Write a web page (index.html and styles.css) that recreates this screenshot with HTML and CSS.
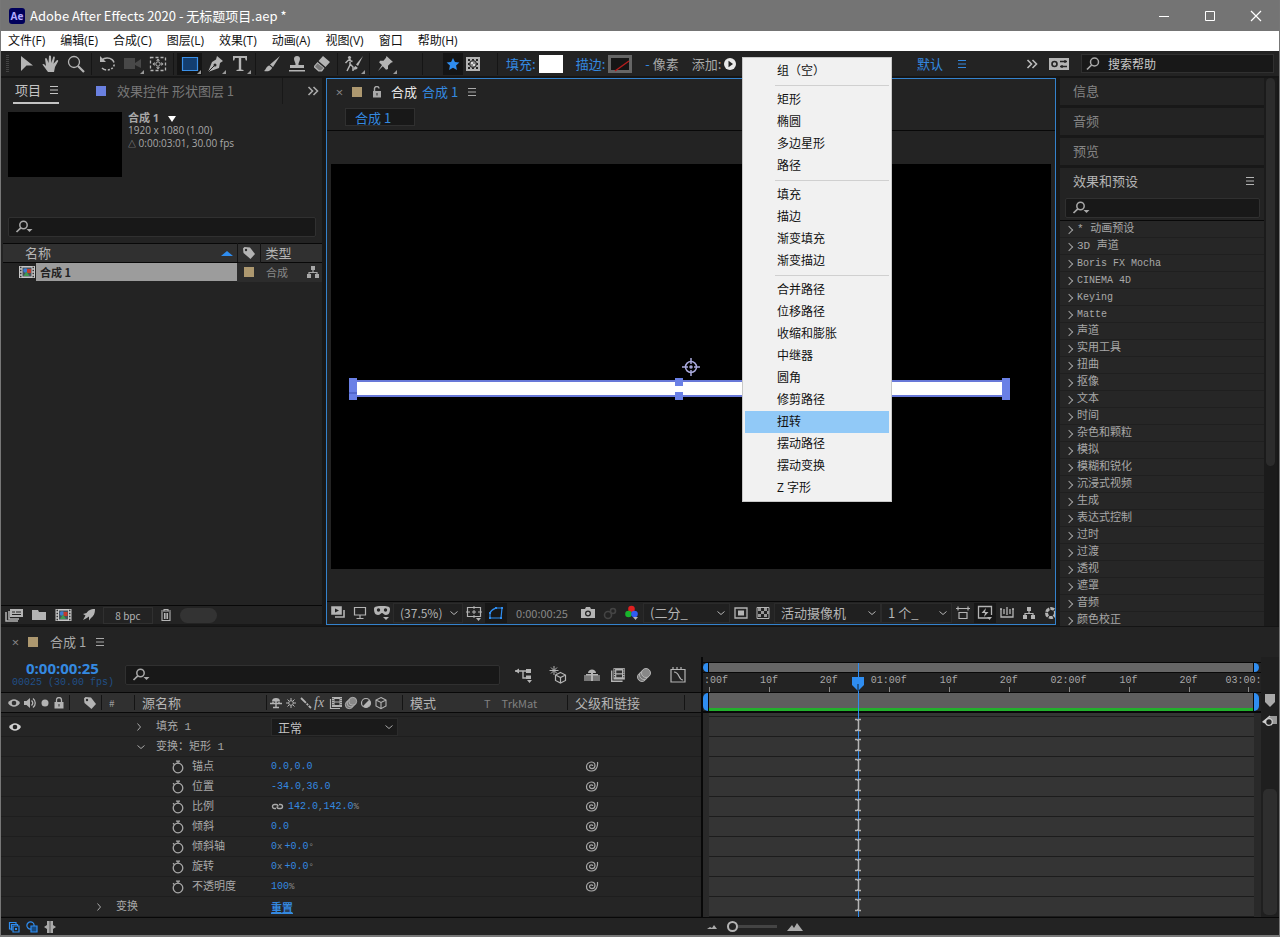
FILE: index.html
```html
<!DOCTYPE html>
<html lang="zh-CN">
<head>
<meta charset="utf-8">
<title>Adobe After Effects 2020 - 无标题项目.aep *</title>
<link rel="stylesheet" href="styles.css">
</head>
<body>
<svg class="defs" aria-hidden="true">
  <symbol id="search" viewBox="0 0 16 16"><circle cx="9.500" cy="6" r="4" fill="none" stroke="currentColor" stroke-width="1.500"/><path d="M6.600 9L2 13.500" stroke="currentColor" stroke-width="1.700"/></symbol>
  <symbol id="searchdrop" viewBox="0 0 18 16"><circle cx="8.500" cy="6" r="3.700" fill="none" stroke="currentColor" stroke-width="1.500"/><path d="M5.800 8.800L1.500 13" stroke="currentColor" stroke-width="1.700"/><path d="M11.500 10h6l-3 3z" fill="currentColor"/></symbol>
  <symbol id="lines" viewBox="0 0 10 10"><path d="M1 1.500h8M1 5h8M1 8.500h8" stroke="currentColor"/></symbol>
  <symbol id="more" viewBox="0 0 12 10"><path d="M1.500 1l4 4-4 4M6.500 1l4 4-4 4" fill="none" stroke="currentColor" stroke-width="1.600"/></symbol>
  <symbol id="chev" viewBox="0 0 10 10"><path d="M3.500 1.500L6.500 5 3.500 8.500" fill="none" stroke="currentColor"/></symbol>
  <symbol id="chevdown" viewBox="0 0 10 10"><path d="M1.500 3.500L5 6.500l3.500-3" fill="none" stroke="currentColor"/></symbol>
  <symbol id="watch" viewBox="0 0 14 14"><circle cx="7" cy="8" r="4.800" fill="none" stroke="currentColor" stroke-width="1.300"/><path d="M5 1.200h4M7 1v2.500M2 3.200l1.600 1.600" stroke="currentColor" stroke-width="1.300"/></symbol>
  <symbol id="whip" viewBox="0 0 14 12"><path d="M12.500 1c.5 4-1 9-6 9C3.500 10 1.500 8.500 1.500 5.800 1.500 3 3.800 1 6.300 1 8.800 1 10 2.500 10 4.600 10 6.500 8.700 7.600 7 7.600 5.500 7.600 4.500 6.800 4.500 5.600c0-1 .7-1.800 1.900-1.800.9 0 1.400.5 1.400 1.300" fill="none" stroke="currentColor" stroke-width="1.200"/></symbol>
  <symbol id="tag" viewBox="0 0 14 14"><path d="M1 2.500L2.500 1 8 1.500 13 8 8.500 13 1.500 7z" fill="currentColor"/><circle cx="4" cy="4" r="1.200" fill="#303030"/></symbol>
  <symbol id="tree" viewBox="0 0 14 14"><path d="M5 1h4v4H5zM1 9h4v4H1zM9 9h4v4H9z" fill="currentColor"/><path d="M7 4v3.500M3 9V7.500h8V9" fill="none" stroke="currentColor" stroke-width="1.200"/></symbol>
  <symbol id="comp" viewBox="0 0 16 14"><path d="M0 1h16v12H0z" fill="#c6c6c6"/><path d="M3.500 2.500h9v9h-9z" fill="#48505a"/><path d="M1 2.500h1.500m-1.500 3h1.500m-1.500 3h1.500m-1.500 3h1.500m11-9H15m-1.500 3H15m-1.500 3H15m-1.500 3H15" stroke="#333" stroke-width="1.300"/><circle cx="6.500" cy="5.500" r="2.200" fill="#3b7bd0"/><path d="M8 4h4v4H8z" fill="#c33b2c"/><path d="M4.500 11l3-4.500 3 4.500z" fill="#3f9b50"/></symbol>
  <symbol id="film" viewBox="0 0 14 14"><path d="M3 1h10v10H3z" fill="currentColor"/><path d="M5.500 3h5v2.500h-5zM5.500 6.500h5V9h-5z" fill="#303030"/><path d="M4 2v8M12 2v8" stroke="#303030" stroke-dasharray="1 1"/><path d="M1.500 3v9.500H11" fill="none" stroke="currentColor" stroke-width="1.200"/></symbol>
  <symbol id="blur" viewBox="0 0 16 16"><circle cx="6" cy="10" r="4.500" fill="#777" stroke="currentColor"/><circle cx="8" cy="8" r="4.500" fill="#777" stroke="currentColor"/><circle cx="10" cy="6" r="4.500" fill="#888" stroke="currentColor"/></symbol>
  <symbol id="cube" viewBox="0 0 14 14"><path d="M7 1.500l5 2.500v6l-5 2.700L2 10V4zM2 4l5 2.500L12 4M7 6.500v6" fill="none" stroke="currentColor" stroke-width="1.100"/></symbol>
  <symbol id="shy" viewBox="0 0 14 14"><path d="M3 5.500C3 3 4.500 2 7 2s4 1 4 3.500z" fill="currentColor"/><path d="M7 4v8M1 7.500h12M4 11.500h6M4 6v1m6-1v1" stroke="currentColor" stroke-width="1.400"/></symbol>
  <symbol id="checks" viewBox="0 0 14 14"><path d="M1 1.500h12v11H1z" fill="none" stroke="currentColor"/><path d="M2 2h3v3H2zm6 0h3v3H8zM5 5h3v3H5zm6 0h2v3h-2zM2 8h3v3H2zm6 0h3v3H8z" fill="#999"/></symbol>
  <symbol id="maskmaker" viewBox="0 0 16 16"><path d="M1 1h14v14H1z" fill="currentColor"/><path d="M3 3h2v2H3zm4 0h2v1H7zm4 0h2v2h-2zM3 7h1v2H3zm9 0h1v2h-1zM3 11h2v2H3zm4 1h2v1H7zm4-1h2v2h-2z" fill="#232323"/><circle cx="8" cy="8" r="3.500" fill="#888" stroke="#232323"/><path d="M6 6h2v2H6zM8 8h2v2H8z" fill="#ddd"/></symbol>
  <symbol id="ibeam" viewBox="0 0 8 14"><path d="M1 1.500h2L4 2.500 5 1.500h2M1 12.500h2l1-1 1 1h2M4.500 2v10" fill="none" stroke="currentColor" stroke-width="1.500"/></symbol>
</svg>

<div class="window">
  <header class="titlebar">
    <span class="logo">Ae</span>
    <h1 class="title">Adobe After Effects 2020 - 无标题项目.aep *</h1>
    <button class="wbtn" aria-label="最小化"><svg width="12" height="12"><path d="M1 6.500h10" stroke="#fff"/></svg></button>
    <button class="wbtn" aria-label="最大化"><svg width="12" height="12"><path d="M1.500 1.500h9v9h-9z" fill="none" stroke="#fff"/></svg></button>
    <button class="wbtn" aria-label="关闭"><svg width="12" height="12"><path d="M1 1l10 10M11 1L1 11" stroke="#fff" stroke-width="1.200"/></svg></button>
  </header>

  <nav class="menubar">
    <button>文件(F)</button><button>编辑(E)</button><button>合成(C)</button><button>图层(L)</button><button>效果(T)</button><button>动画(A)</button><button>视图(V)</button><button>窗口</button><button>帮助(H)</button>
  </nav>

  <div class="toolbar">
    <i class="grip"></i>
    <button class="tool" aria-label="选取"><svg width="20" height="20"><path d="M5 2l12 9.500H10.500L5 17z" fill="currentColor"/></svg></button>
    <button class="tool" aria-label="手形"><svg width="20" height="20"><path d="M7 18c-2-3-4-5-5.500-7.500 1-1 2 0 3.500 1.500L4 4.500c1.200-.6 2 0 2.200 1L7.500 9 8 2c.8-.8 1.800-.6 2 .3L10.300 9l2-6.300c1-.5 1.700.1 1.500 1.200L12.500 9.800 16 6c1.100-.2 1.500.6 1 1.600L14 13l-1 5z" fill="currentColor"/></svg></button>
    <button class="tool" aria-label="缩放"><svg width="20" height="20"><circle cx="8" cy="8" r="5.500" fill="none" stroke="currentColor" stroke-width="1.300"/><path d="M12 12l6 6" stroke="currentColor" stroke-width="2.200"/></svg></button>
    <i class="sep"></i>
    <button class="tool" aria-label="旋转"><svg width="20" height="20"><path d="M4 6a7 6 0 1 1 0 8" fill="none" stroke="currentColor" stroke-width="1.600" stroke-dasharray="14 2 2 1.500 2 1.500 2 1.500"/><path d="M2 2v6h6z" fill="currentColor"/></svg></button>
    <button class="tool dim more" aria-label="摄像机"><svg width="20" height="20"><path d="M1 4h11v11H1zM12 9l6-4v9l-6-3z" fill="currentColor"/></svg></button>
    <button class="tool" aria-label="锚点"><svg width="20" height="20"><path d="M2.500 3.500h15v13h-15z" fill="none" stroke="currentColor" stroke-width="1.300" stroke-dasharray="3 2"/><circle cx="10" cy="10" r="2.200" fill="none" stroke="currentColor"/><path d="M10 4.500l2 2.200H8zM10 15.500l2-2.200H8zM4.500 10l2.200-2v4zM15.500 10l-2.200-2v4z" fill="currentColor"/></svg></button>
    <i class="sep"></i>
    <button class="tool active more" aria-label="矩形"><svg width="20" height="20"><path d="M2.500 3.500h15v13h-15z" fill="#133e70" stroke="#3b90e8" stroke-width="1.200"/></svg></button>
    <button class="tool more" aria-label="钢笔"><svg width="20" height="20"><path d="M12 2l6 5-3 2-1 5-11 4 4-10 4-2.500zM3 18l6-6" fill="currentColor"/><path d="M3 18l6-6" stroke="#232323"/><circle cx="10" cy="11" r="1.500" fill="#232323"/></svg></button>
    <button class="tool more" aria-label="文字"><svg width="20" height="20"><path d="M3 2h14v4.500h-1.200L15 4H11.200v11.500l2.300.5v1h-7v-1l2.300-.5V4H5l-.8 2.500H3z" fill="currentColor"/></svg></button>
    <i class="sep"></i>
    <button class="tool" aria-label="画笔"><svg width="20" height="20"><path d="M18 2L11 13 8 10.500zM7.500 11.500l2.700 2.200C9 17 5 18 2 17c2-1 2-5 5.500-5.500z" fill="currentColor"/></svg></button>
    <button class="tool" aria-label="仿制图章"><svg width="20" height="20"><path d="M8.500 11c.4-2-1.500-4-1.500-6a3 3 0 0 1 6 0c0 2-1.900 4-1.500 6H17v3H3v-3zM2 16h16v1.500H2z" fill="currentColor"/></svg></button>
    <button class="tool" aria-label="橡皮擦"><svg width="20" height="20"><path d="M11 2l7 6-4.500 5-7-6zM5.500 8l7 6-2.500 3.500H6.500L2 13.500V12z" fill="currentColor"/><path d="M5.500 9.500L3 12.500 7 16.200h2L11.500 14z" fill="#777"/></svg></button>
    <i class="sep"></i>
    <button class="tool more" aria-label="Roto 笔刷"><svg width="20" height="20"><circle cx="5.500" cy="3.500" r="1.600" fill="currentColor"/><path d="M6 5v6l-3 6M6 10l3 3v4M1.500 9l3-3 4 1.500" fill="none" stroke="currentColor" stroke-width="1.500"/><path d="M19 2l-5 10-2-1.500zM11.500 12l2.200 1.800c-.8 2-3 2.200-5 1.700 1.500-.5 1-3 2.800-3.500z" fill="currentColor"/></svg></button>
    <i class="sep"></i>
    <button class="tool more" aria-label="人偶位置控点"><svg width="20" height="20"><path d="M10.500 2l6.500 6-2 .8-3 3 0 3.200-2 .8-3.200-3.500L2 17l4-6-2.800-2.500.8-1.700h3.500l2.500-3z" fill="currentColor"/></svg></button>
    <i class="sep wide"></i>
    <button class="tool small active" aria-label="创建形状"><svg width="14" height="14" viewBox="0 0 16 16"><path d="M8 1l2.200 4.700 5.100.6-3.800 3.500 1 5.100L8 12.400l-4.500 2.500 1-5.100L.7 6.300l5.100-.6z" fill="#2f8df0"/></svg></button>
    <button class="tool small" aria-label="创建蒙版"><svg width="16" height="16"><use href="#maskmaker"/></svg></button>
    <i class="sep mid"></i>
    <div class="opt blue">填充:<button class="swatch fill" aria-label="填充颜色"></button></div>
    <div class="opt blue">描边:<button class="swatch stroke" aria-label="描边颜色"><svg width="22" height="16"><path d="M4 13L18 3" stroke="#b51d1d" stroke-width="1.500"/></svg></button></div>
    <div class="opt"><span class="blue">-</span> 像素</div>
    <div class="opt">添加:<button class="add" aria-label="添加"><svg width="12" height="12"><circle cx="6" cy="6" r="6" fill="#e8e8e8"/><path d="M4.500 2.800L9 6 4.500 9.200z" fill="#222"/></svg></button></div>
    <div class="workspace blue">默认<svg width="10" height="10"><use href="#lines"/></svg></div>
    <button class="chevmore" aria-label="更多工作区"><svg width="12" height="10"><use href="#more"/></svg></button>
    <button class="tool" aria-label="同步设置"><svg width="20" height="14"><path d="M0 1h20v12H0z" fill="currentColor"/><circle cx="5.500" cy="7" r="2.500" fill="none" stroke="#232323" stroke-width="1.600"/><path d="M11 4.500h7M11 9.500h7M16 3v3M13 8v3" stroke="#232323" stroke-width="1.300"/></svg></button>
    <label class="help"><svg width="16" height="16"><use href="#search"/></svg><input type="text" placeholder="搜索帮助" aria-label="搜索帮助"></label>
  </div>

  <main class="panels">
    <section class="project panel">
      <div class="tabs">
        <button class="tab on">项目<svg width="10" height="10"><use href="#lines"/></svg></button>
        <button class="tab second"><i class="sq violet"></i>效果控件 形状图层 1</button>
        <button class="tabmore" aria-label="更多面板"><svg width="12" height="10"><use href="#more"/></svg></button>
      </div>
      <div class="info">
        <div class="thumb"></div>
        <div class="meta"><b>合成 1 <svg width="8" height="6"><path d="M0 0h8L4 6z" fill="#fff"/></svg></b><span>1920 x 1080 (1.00)</span><span><small>△</small> 0:00:03:01, 30.00 fps</span></div>
      </div>
      <label class="field"><svg width="18" height="16"><use href="#searchdrop"/></svg><input type="text" aria-label="搜索项目"></label>
      <table class="files">
        <colgroup><col class="c1"><col class="c2"><col class="c3"><col class="c4"></colgroup>
        <thead><tr><th><div class="namehead"><span>名称</span><svg width="12" height="5"><path d="M0 5L6 0l6 5z" fill="#2f8df0"/></svg></div></th><th class="cen"><svg width="14" height="14"><use href="#tag"/></svg></th><th>类型</th><th></th></tr></thead>
        <tbody><tr><td class="nm"><div class="namecell"><svg width="16" height="14"><use href="#comp"/></svg><b>合成 1</b></div></td><td class="cen"><i class="sq tan"></i></td><td class="kind">合成</td><td class="cen"><svg width="14" height="14"><use href="#tree"/></svg></td></tr></tbody>
      </table>
      <div class="projbar">
        <button aria-label="解释素材"><svg width="18" height="14"><path d="M5 1h13v8H5z" fill="currentColor"/><path d="M7 4h3m1 0h5M7 6.500h9" stroke="#232323"/><path d="M1 4v9h12M4 3v8h10" fill="none" stroke="currentColor" stroke-width="1.500"/></svg></button>
        <button aria-label="新建文件夹"><svg width="14" height="14"><path d="M0 2h6l1 2h7v8H0z" fill="currentColor"/></svg></button>
        <button aria-label="新建合成"><svg width="17" height="14"><use href="#comp"/></svg></button>
        <button aria-label="加速"><svg width="14" height="14"><path d="M13 1C8 1 6 3 4.500 5L1 6l2.500 1.500L1 12l3-1.500L7 8.500v4L9 10c2.500-2 4-4 4-9z" fill="currentColor"/></svg></button>
        <button class="bpc">8 bpc</button>
        <button aria-label="删除"><svg width="12" height="14"><path d="M1 3h10M4 3V1.500h4V3M2 4v8.500h8V4M4.500 5v6M7.500 5v6M6 5v6" fill="none" stroke="currentColor" stroke-width="1.100"/></svg></button>
        <i class="pill"></i>
      </div>
    </section>

    <section class="viewer">
      <div class="vtabs">
        <button class="x" aria-label="关闭面板">×</button><i class="sq tan"></i>
        <svg class="lock" width="10" height="12"><path d="M1 5h8v6.500H1z" fill="currentColor"/><path d="M2.500 6V3a2 2 0 0 1 4.500-.5" fill="none" stroke="currentColor" stroke-width="1.400"/><path d="M5 7v2.500" stroke="#232323"/></svg>
        <span class="white">合成</span><span class="blue">合成 1</span><svg class="mn" width="10" height="10"><use href="#lines"/></svg>
      </div>
      <div class="crumbs"><button>合成 1</button></div>
      <div class="stage">
        <svg class="canvas" viewBox="0 0 720 405">
          <path d="M0 0h720v405H0z" fill="#000"/>
          <path d="M22 217h656v15H22z" fill="#fff" stroke="#6878d8" stroke-width="2"/>
          <path d="M18 214h8v22h-8zM671 214h8v22h-8zM344 214h8v8h-8zM344 228h8v8h-8z" fill="#6a80e6"/>
          <path d="M18 229h8" stroke="#3c4fae"/>
          <g fill="none" stroke="#a9a9dc" stroke-width="1.500"><circle cx="360" cy="203" r="5.500"/><circle cx="360" cy="203" r="1"/><path d="M360 194v6M360 206v6M351 203h6M363 203h6"/></g>
        </svg>
      </div>
      <div class="vbar">
        <button aria-label="始终预览"><svg width="14" height="14"><path d="M1 1h9v7H1zM4 11h9V4" fill="none" stroke="currentColor" stroke-width="1.600"/><path d="M1 1h9v7H1z" fill="currentColor"/><path d="M4 2.500L8 4.500 4 6.500z" fill="#232323"/></svg></button>
        <button aria-label="主查看器"><svg width="14" height="14"><path d="M1.500 1.500h11v7.500h-11zM7 9v3M3.500 12.500h7" fill="none" stroke="currentColor" stroke-width="1.200"/></svg></button>
        <button aria-label="VR"><svg width="16" height="16"><path d="M0 4C0 1 4 1 8 1s8 0 8 3-1 6-4 6c-2 0-3-2-4-2s-2 2-4 2C1 10 0 7 0 4z" fill="currentColor"/><circle cx="4.500" cy="5" r="1.700" fill="#232323"/><circle cx="11.500" cy="5" r="1.700" fill="#232323"/><path d="M9 12h6l-3 3z" fill="currentColor"/></svg></button>
        <span class="sel w1"><select aria-label="放大率"><option>(37.5%)</option></select><svg width="10" height="10"><use href="#chevdown"/></svg></span>
        <button aria-label="网格"><svg width="16" height="16"><path d="M1.500 2.500h13v9h-13z" fill="none" stroke="currentColor" stroke-width="1.200"/><path d="M8 1v3M8 10v3M0 7h4M12 7h4M6 7h4M8 5v4" stroke="currentColor"/><path d="M10 13h5l-2.500 3z" fill="currentColor"/></svg></button>
        <button class="on" aria-label="蒙版可见"><svg width="16" height="14"><path d="M2 12V7C3 4 6 3 8 2h6l-1 10z" fill="none" stroke="#2f8df0" stroke-width="1.200"/><path d="M1 11h2v2H1zM12 11h2v2h-2zM13 1h2v2h-2zM1 6h2v2H1zM7 1h2v2H7z" fill="#2f8df0"/></svg></button>
        <span class="time">0:00:00:25</span>
        <button aria-label="快照"><svg width="14" height="14"><path d="M0 3h4l1-2h4l1 2h4v9H0z" fill="currentColor"/><circle cx="7" cy="7.500" r="3" fill="#232323"/><circle cx="7" cy="7.500" r="1.700" fill="currentColor"/></svg></button>
        <button class="dim" aria-label="显示快照"><svg width="14" height="14"><circle cx="5" cy="9" r="3.500" fill="none" stroke="#444" stroke-width="1.600"/><circle cx="10" cy="5" r="2.500" fill="none" stroke="#444" stroke-width="1.600"/></svg></button>
        <button aria-label="通道"><svg width="14" height="16"><circle cx="6.500" cy="4" r="3.300" fill="#e02020"/><circle cx="3.500" cy="9" r="3.300" fill="#19b42c"/><circle cx="9.500" cy="9" r="3.300" fill="#315cf0"/><path d="M8 12h5l-2.500 3z" fill="currentColor"/></svg></button>
        <span class="sel w2"><select aria-label="分辨率"><option>(二分_</option></select><svg width="10" height="10"><use href="#chevdown"/></svg></span>
        <button aria-label="目标区域"><svg width="14" height="14"><path d="M1 2h12v10H1z" fill="none" stroke="currentColor" stroke-width="1.300"/><path d="M4 4.500h6v5H4z" fill="currentColor"/></svg></button>
        <button aria-label="透明网格"><svg width="14" height="14"><use href="#checks"/></svg></button>
        <span class="sel w3"><select aria-label="3D 视图"><option>活动摄像机</option></select><svg width="10" height="10"><use href="#chevdown"/></svg></span>
        <span class="sel w4"><select aria-label="视图布局"><option>1 个_</option></select><svg width="10" height="10"><use href="#chevdown"/></svg></span>
        <button aria-label="像素长宽比"><svg width="14" height="14"><path d="M3 6.500h8v6H3zM0 2.500h14M2 .5v4M12 .5v4" fill="none" stroke="currentColor" stroke-width="1.200"/></svg></button>
        <button class="on" aria-label="快速预览"><svg width="16" height="16"><path d="M13 13H1.500V1.500h13V10" fill="none" stroke="currentColor" stroke-width="1.300"/><path d="M9 3L4.500 8H8l-1 4 4.500-5H8z" fill="currentColor"/><path d="M10 12h5l-2.500 3z" fill="currentColor"/></svg></button>
        <button aria-label="时间轴"><svg width="14" height="14"><path d="M1 3v8h12V3M4 3v5M7 1v8M10 3v5M0 3h2M12 3h2" fill="none" stroke="currentColor" stroke-width="1.300"/></svg></button>
        <button aria-label="流程图"><svg width="14" height="14"><use href="#tree"/></svg></button>
        <button aria-label="重置曝光度"><svg width="14" height="14"><circle cx="7" cy="7" r="4.500" fill="none" stroke="currentColor" stroke-width="3" stroke-dasharray="4 1"/></svg></button>
      </div>
    </section>

    <aside class="side">
      <div class="sidebody">
        <h2>信息</h2><h2>音频</h2><h2>预览</h2>
        <h2 class="open">效果和预设<svg width="10" height="10"><use href="#lines"/></svg></h2>
        <label class="field"><svg width="18" height="16"><use href="#searchdrop"/></svg><input type="text" aria-label="搜索效果"></label>
        <ul class="effects">
          <li>* 动画预设</li><li>3D 声道</li><li class="latin">Boris FX Mocha</li><li class="latin">CINEMA 4D</li><li class="latin">Keying</li><li class="latin">Matte</li><li>声道</li><li>实用工具</li><li>扭曲</li><li>抠像</li><li>文本</li><li>时间</li><li>杂色和颗粒</li><li>模拟</li><li>模糊和锐化</li><li>沉浸式视频</li><li>生成</li><li>表达式控制</li><li>过时</li><li>过渡</li><li>透视</li><li>遮罩</li><li>音频</li><li>颜色校正</li>
        </ul>
      </div>
      <div class="scroll"><i></i></div>
    </aside>
  </main>

  <section class="timeline">
    <div class="vtabs">
      <button class="x" aria-label="关闭时间轴">×</button><i class="sq tan"></i><span class="name">合成 1</span><svg class="mn" width="10" height="10"><use href="#lines"/></svg>
    </div>
    <div class="tgrid">
      <div class="layers">
        <div class="controls">
          <div class="clock"><b>0:00:00:25</b><span>00025 (30.00 fps)</span></div>
          <label class="field"><svg width="18" height="16"><use href="#searchdrop"/></svg><input type="text" aria-label="搜索图层"></label>
          <div class="icons">
            <button aria-label="合成微型流程图"><svg width="18" height="16"><path d="M0 4h12M8 4v7h4" fill="none" stroke="currentColor" stroke-width="1.400"/><path d="M0 4l4-2.500v5zM11 2h5v4h-5zM11 8.500h5V12h-5zM12 13h5l-2.500 3z" fill="currentColor"/></svg></button>
            <button aria-label="草图 3D"><svg width="18" height="18"><path d="M5 0v9M.5 4.500h9M2 1.500l6 6M8 1.500l-6 6" stroke="currentColor"/><path d="M11.500 6.500l5 2.500v5.500l-5 2.500-5-2.500V9zM6.500 9l5 2.500 5-2.500M11.500 11.500V17" fill="#232323" stroke="currentColor" stroke-width="1.200"/></svg></button>
            <button aria-label="隐藏躲避图层"><svg width="16" height="14"><path d="M0 7h16v6H0z" fill="#777"/><path d="M4 5c0-2 2-3.500 4-3.500S12 3 12 5zM2 6h12v1.500H2zM7 3h2v10H7z" fill="currentColor"/></svg></button>
            <button aria-label="帧混合"><svg width="16" height="16"><use href="#film"/></svg></button>
            <button aria-label="运动模糊"><svg width="16" height="16"><use href="#blur"/></svg></button>
            <button class="graph" aria-label="图表编辑器"><svg width="16" height="16"><path d="M1 2.500h14V15H1zM3 0v2M7 0v2M11 0v2M4 5c6 0 4 8 9 8" fill="none" stroke="currentColor" stroke-width="1.200"/></svg></button>
          </div>
        </div>
        <div class="colhead">
          <div class="av"><svg width="12" height="12"><path d="M0 6c3-5 9-5 12 0-3 5-9 5-12 0z" fill="currentColor"/><circle cx="6" cy="6" r="2.300" fill="#303030"/></svg><svg width="14" height="12"><path d="M1 4h2.500L7 1v10L3.500 8H1z" fill="currentColor"/><path d="M8.500 3.500c1.500 1.500 1.500 3.500 0 5M10 1.500c3 2.500 3 6.500 0 9" fill="none" stroke="currentColor" stroke-width="1.300"/></svg><svg width="10" height="12"><circle cx="5" cy="6" r="3.500" fill="currentColor"/></svg><svg width="12" height="12"><path d="M1.500 5h9v6.500h-9z" fill="currentColor"/><path d="M3.500 6V3a2.500 2.500 0 0 1 5 0v3" fill="none" stroke="currentColor" stroke-width="1.300"/><path d="M6 7v2.500" stroke="#303030"/></svg></div>
          <div class="tagcol"><svg width="14" height="14"><use href="#tag"/></svg></div>
          <div class="num">#</div>
          <div>源名称</div>
          <div class="switches"><svg width="14" height="14"><use href="#shy"/></svg><svg width="14" height="14"><circle cx="7" cy="7" r="2.300" fill="none" stroke="currentColor"/><path d="M7 2v2.500M7 9.500V12M2 7h2.500M9.500 7H12M3.500 3.500l1.500 1.500M9 9l1.500 1.500M10.500 3.500L9 5M5 9l-1.500 1.500" stroke="currentColor"/></svg><svg width="14" height="14"><path d="M2 2l10 10" stroke="currentColor" stroke-width="1.800" stroke-dasharray="7 1 2 1"/></svg><em>fx</em><svg width="14" height="14"><use href="#film"/></svg><svg width="14" height="14"><use href="#blur"/></svg><svg width="14" height="14"><circle cx="7" cy="7" r="4.500" fill="none" stroke="currentColor" stroke-width="1.200"/><path d="M3.800 10.200a4.500 4.500 0 0 0 6.400-6.400z" fill="currentColor"/></svg><svg width="14" height="14"><use href="#cube"/></svg></div>
          <div class="mode"><span>模式</span><span class="trk">T</span><span class="trk">TrkMat</span></div>
          <div>父级和链接</div>
          <div></div>
        </div>
        <div class="rows">
          <div class="row cut"></div>
          <div class="row"><div class="cell n1"><svg class="eye" width="12" height="12"><path d="M0 6c3-5 9-5 12 0-3 5-9 5-12 0z" fill="currentColor"/><circle cx="6" cy="6" r="2.300" fill="#232323"/></svg><svg width="10" height="10"><use href="#chev"/></svg><span>填充 1</span></div><div><span class="sel blend"><select aria-label="混合模式"><option>正常</option></select><svg width="10" height="10"><use href="#chevdown"/></svg></span></div></div>
          <div class="row"><div class="cell n2"><svg width="10" height="10"><use href="#chevdown"/></svg><span>变换：矩形 1</span></div></div>
          <div class="row"><div class="cell prop"><svg width="14" height="14"><use href="#watch"/></svg><span>锚点</span></div><div class="val">0.0<small>,</small>0.0</div><svg class="whip" width="14" height="12"><use href="#whip"/></svg></div>
          <div class="row"><div class="cell prop"><svg width="14" height="14"><use href="#watch"/></svg><span>位置</span></div><div class="val">-34.0<small>,</small>36.0</div><svg class="whip" width="14" height="12"><use href="#whip"/></svg></div>
          <div class="row"><div class="cell prop"><svg width="14" height="14"><use href="#watch"/></svg><span>比例</span></div><div class="val"><svg class="link" width="13" height="8"><path d="M5 5.500H3.500a2 2 0 0 1 0-4H5a2 2 0 0 1 2 2M8 1.500h1.500a2 2 0 0 1 0 4H8a2 2 0 0 1-2-2" fill="none" stroke="#aaa" stroke-width="1.400"/></svg>142.0<small>,</small>142.0<small>%</small></div><svg class="whip" width="14" height="12"><use href="#whip"/></svg></div>
          <div class="row"><div class="cell prop"><svg width="14" height="14"><use href="#watch"/></svg><span>倾斜</span></div><div class="val">0.0</div><svg class="whip" width="14" height="12"><use href="#whip"/></svg></div>
          <div class="row"><div class="cell prop"><svg width="14" height="14"><use href="#watch"/></svg><span>倾斜轴</span></div><div class="val">0<small class="turn">x</small>+0.0<small>°</small></div><svg class="whip" width="14" height="12"><use href="#whip"/></svg></div>
          <div class="row"><div class="cell prop"><svg width="14" height="14"><use href="#watch"/></svg><span>旋转</span></div><div class="val">0<small class="turn">x</small>+0.0<small>°</small></div><svg class="whip" width="14" height="12"><use href="#whip"/></svg></div>
          <div class="row"><div class="cell prop"><svg width="14" height="14"><use href="#watch"/></svg><span>不透明度</span></div><div class="val">100<small>%</small></div><svg class="whip" width="14" height="12"><use href="#whip"/></svg></div>
          <div class="row"><div class="cell n0"><svg width="10" height="10"><use href="#chev"/></svg><span>变换</span></div><div><a class="reset" href="#">重置</a></div></div>
        </div>
      </div>

      <div class="tracks">
        <div class="navbar"><i class="cap l"></i><i class="bar"></i><i class="cap r"></i></div>
        <div class="ruler"><span>:00f</span><span>10f</span><span>20f</span><span>01:00f</span><span>10f</span><span>20f</span><span>02:00f</span><span>10f</span><span>20f</span><span>03:00:</span></div>
        <div class="work"><i class="cap l"></i><i class="bar"></i><i class="cap r"></i></div>
        <div class="lanes"><i class="cut"></i><i></i><i></i><i></i><i></i><i></i><i></i><i></i><i></i><i></i><i></i></div>
        <div class="overlay"><div class="playhead"><svg class="head" width="12" height="14"><path d="M0 0h12v8l-6 6-6-6z" fill="#2f8df0"/><path d="M6 7v7" stroke="#123"/></svg><div class="beams"><svg width="8" height="14"><use href="#ibeam"/></svg><svg width="8" height="14"><use href="#ibeam"/></svg><svg width="8" height="14"><use href="#ibeam"/></svg><svg width="8" height="14"><use href="#ibeam"/></svg><svg width="8" height="14"><use href="#ibeam"/></svg><svg width="8" height="14"><use href="#ibeam"/></svg><svg width="8" height="14"><use href="#ibeam"/></svg><svg width="8" height="14"><use href="#ibeam"/></svg><svg width="8" height="14"><use href="#ibeam"/></svg><svg width="8" height="14"><use href="#ibeam"/></svg></div></div></div>
      </div>

      <div class="tside">
        <svg width="12" height="16"><path d="M1 1h10v8l-5 5-5-5z" fill="#aaa"/></svg>
        <svg width="16" height="16"><path d="M7 3h8v8H7z" fill="#999"/><path d="M1 9l7-6" stroke="#ccc" stroke-width="1.300"/><circle cx="7" cy="9" r="3.300" fill="#232323" stroke="#ccc" stroke-width="1.200"/><path d="M0 9l4-3v5z" fill="#ccc"/></svg>
        <i class="thumbbar"></i>
      </div>
    </div>
    <footer class="tfoot">
      <button aria-label="图层开关"><svg width="12" height="12"><path d="M5 5h6v6H5zM3 8H1.500V1.500H8V3M3.500 9.500v-6h6V5" fill="none" stroke="#2f8df0" stroke-width="1.200"/><path d="M7 7h2v2H7z" fill="#2f8df0"/></svg></button>
      <button aria-label="转换控制"><svg width="12" height="12"><circle cx="4.500" cy="4.500" r="3.600" fill="none" stroke="#2f8df0" stroke-width="1.200"/><path d="M5 5h6v6H5z" fill="#174a80" stroke="#2f8df0" stroke-width="1.200"/></svg></button>
      <button aria-label="入点出点"><svg width="12" height="12"><path d="M3 0h6v4l3 2-3 2v4H3V8L0 6l3-2z" fill="#aaa"/><path d="M6 0v12" stroke="#555"/></svg></button>
      <div class="zoom"><svg width="12" height="8"><path d="M1 6l3-2 2 1 2-3 3 4z" fill="#aaa"/></svg><input type="range" min="0" max="100" value="0" aria-label="时间缩放"><svg width="18" height="8"><path d="M1 8l5-6 2 3 3-5 6 8z" fill="#aaa"/></svg></div>
    </footer>
  </section>

  <div class="popup" role="menu">
    <button>组（空）</button><hr>
    <button>矩形</button><button>椭圆</button><button>多边星形</button><button>路径</button><hr>
    <button>填充</button><button>描边</button><button>渐变填充</button><button>渐变描边</button><hr>
    <button>合并路径</button><button>位移路径</button><button>收缩和膨胀</button><button>中继器</button><button>圆角</button><button>修剪路径</button><button class="hover">扭转</button><button>摆动路径</button><button>摆动变换</button><button>Z 字形</button>
  </div>
</div>
</body>
</html>
```

FILE: styles.css
```css
* { box-sizing: border-box; }
body {
  margin: 0;
  background: #141414;
  color: #a8a8a8;
  font: 13px/18px "Noto Sans CJK SC", sans-serif;
}
button, input, select { font: inherit; color: inherit; background: none; border: 0; padding: 0; margin: 0; }
button { white-space: nowrap; }
input, select { min-width: 0; outline: 0; }
h1, h2 { margin: 0; font-weight: 400; }
svg { flex: none; display: block; }
.defs { display: none; }
.blue { color: #3489e0; }
.white { color: #e8e8e8; }
.sq { display: block; width: 10px; height: 10px; flex: none; }
.tan { background: #ad986f; }
.violet { background: #6a80e0; }

.window {
  position: relative;
  display: flex;
  flex-direction: column;
  height: 100vh;
  border: solid #777;
  border-width: 0 1px 2px;
  overflow: hidden;
}

/* title and menus */
.titlebar { display: flex; align-items: center; flex: none; height: 31px; padding-left: 8px; background: #747474; color: #fff; }
.logo { width: 16px; height: 16px; border-radius: 3px; background: #00005b; color: #b0a8ff; font: bold 10px/16px "Open Sans", sans-serif; text-align: center; }
.title { flex: 1; margin-left: 5px; font-size: 13px; }
.wbtn { display: grid; place-items: center; width: 46px; height: 31px; }
.menubar { display: flex; flex: none; gap: 15px; height: 20px; padding-left: 7px; background: #fff; color: #111; font-size: 12px; font-family: "Open Sans", "Noto Sans CJK SC", sans-serif; }

/* tools */
.toolbar { display: flex; align-items: center; flex: none; height: 27px; padding-right: 5px; background: #232323; border-bottom: 2px solid #161616; }
.grip { width: 3px; height: 18px; margin: 0 4px 0 5px; background: repeating-linear-gradient(#444 0 1px, #222 1px 2px); }
.tool { position: relative; display: grid; place-items: center; width: 25px; height: 22px; flex: none; color: #b4b4b4; }
.tool.small { width: 20px; }
.tool.active { background: #141414; }
.tool.dim { color: #484848; }
.tool.more::after { content: ""; position: absolute; right: 1px; bottom: 1px; border: solid transparent; border-width: 0 0 4px 4px; border-bottom-color: #999; }
.sep { width: 1px; height: 22px; margin: 0 3px; background: #151515; flex: none; }
.sep.wide { margin: 0 20px 0 24px; }
.sep.mid { margin: 0 8px 0 14px; }
.opt { display: flex; align-items: center; gap: 3px; margin-right: 13px; white-space: nowrap; }
.swatch { width: 24px; height: 18px; }
.swatch.fill { background: #fff; }
.swatch.stroke { background: #151515; border: 3px solid #666; display: grid; place-items: center; }
.workspace { display: flex; align-items: center; gap: 14px; margin-left: auto; }
.chevmore { margin: 0 8px 0 59px; color: #bbb; }
.help { display: flex; align-items: center; width: 193px; height: 19px; margin-left: 10px; padding-left: 3px; gap: 7px; background: #181818; border: 1px solid #303030; font-size: 12px; }
.help input { flex: 1; }
.help input::placeholder { color: #c8c8c8; opacity: 1; }

/* panels */
.panels { display: flex; flex: 1; min-height: 0; gap: 4px; background: #181818; padding-right: 2px; }
.panel { background: #232323; }
.project { display: flex; flex-direction: column; width: 321px; flex: none; margin-bottom: 2px; padding-left: 2px; }
.tabs { display: flex; height: 26px; padding-left: 10px; color: #777; }
.tab { display: flex; align-items: center; gap: 8px; }
.tab.on { color: #c4c4c4; padding: 0 0 0 2px; border-bottom: 2px solid #c4c4c4; gap: 8px; }
.tab.second { margin-left: 37px; padding-right: 48px; gap: 11px; border-right: 1px solid #181818; }
.tabmore { margin: 0 3px 0 auto; color: #aaa; }
.info { display: flex; gap: 6px; margin: 8px 0 0 5px; }
.thumb { width: 114px; height: 65px; background: #000; }
.meta { font: 10px/13px "Open Sans", "Noto Sans CJK SC", sans-serif; margin-top: -1px; }
.meta b, .meta span { display: block; }
.meta b svg { display: inline-block; margin-left: 6px; }
.meta b { font-size: 11px; }
.meta small { font-size: 8px; }
.field { display: flex; align-items: center; height: 20px; padding-left: 6px; background: #181818; border: 1px solid #303030; border-radius: 2px; }
.field input { flex: 1; }
.project .field { margin: 40px 6px 6px 5px; }
.files { width: 100%; border-collapse: collapse; table-layout: fixed; border-top: 1px solid #080808; }
.files .c2 { width: 23px; }
.files .c3 { width: 44px; }
.files .c4 { width: 18px; }
.files .c1 { width: auto; }
.files th { height: 19px; padding: 0; background: #303030; font-weight: 400; text-align: left; border-bottom: 1px solid #080808; color: #b4b4b4; line-height: 18px; }
.files th:nth-child(2) { border: solid #141414; border-width: 0 1px 1px; }
.files th:nth-child(3) { padding-left: 5px; }
.files td { height: 19px; padding: 0; background: #2c2c2c; }
.files td.nm { background: #232323; }
.files .cen svg, .files .cen .sq { margin: auto; }
.namehead { display: flex; align-items: center; justify-content: space-between; padding: 0 4px 0 22px; }
.namecell { display: flex; align-items: center; gap: 1px; padding-left: 16px; }
.namecell b { flex: 1; padding-left: 4px; background: #9c9c9c; color: #222; font-size: 11px; }
.files td.kind { font-size: 11px; color: #888; padding-left: 6px; }
.projbar { display: flex; align-items: center; height: 19px; margin-top: auto; margin-left: -2px; border-top: 1px solid #080808; color: #b4b4b4; }
.projbar button { display: grid; place-items: center; width: 25px; }
.projbar .bpc { display: block; width: 50px; margin-left: 2px; height: 17px; border: 1px solid #303030; font-size: 10px; line-height: 15px; }
.pill { width: 37px; height: 15px; margin-left: 2px; border-radius: 8px; background: #333; }

/* viewer */
.viewer { display: flex; flex-direction: column; flex: 1; min-width: 0; margin-bottom: 1px; background: #232323; border: 1px solid #3482cc; overflow: hidden; }
.vtabs { display: flex; align-items: center; height: 25px; padding-left: 8px; white-space: nowrap; }
.vtabs .x { width: 9px; margin-right: 8px; color: #888; font-family: "Open Sans", sans-serif; }
.lock { margin: 0 9px 0 10px; }
.vtabs .white { margin-right: 5px; }
.mn { margin-left: 9px; }
.crumbs { flex: none; height: 27px; padding: 4px 0 0 18px; border-bottom: 1px solid #080808; }
.crumbs button { display: block; width: 70px; height: 18px; padding-left: 9px; border: 1px solid #303030; background: #181818; color: #3489e0; line-height: 15px; text-align: left; }
.stage { flex: 1; min-height: 0; display: flex; align-items: center; padding: 0 4px; }
.canvas { width: 100%; max-height: 100%; }
.vbar { display: flex; align-items: center; flex: none; height: 23px; border-top: 1px solid #080808; overflow: hidden; color: #b4b4b4; }
.vbar button { display: grid; place-items: center; width: 22px; height: 20px; flex: none; }
.vbar .on { background: #171717; }
.sel { position: relative; display: block; flex: none; }
.sel select { display: block; width: 100%; height: 20px; appearance: none; background: #202020; border: 1px solid #2b2b2b; padding-left: 6px; }
.sel svg { position: absolute; right: 4px; top: 5px; pointer-events: none; }
.w1 { width: 70px; font-size: 12px; }
.w2 { width: 87px; }
.w3 { width: 107px; }
.w4 { width: 71px; }
.time { width: 70px; flex: none; text-align: center; font-size: 11px; color: #888; }

/* effects */
.side { display: flex; width: 217px; flex: none; }
.sidebody { flex: 1; overflow: hidden; background: #232323; }
.side h2 { height: 30px; padding: 0 13px; font-size: 13px; line-height: 26px; color: #858585; border-bottom: 3px solid #181818; }
.side h2.open { display: flex; align-items: center; justify-content: space-between; height: 30px; padding: 0 9px 4px 13px; border: 0; color: #b4b4b4; }
.side .field { margin: 0 4px 2px 5px; }
.effects { margin: 0; padding: 0; list-style: none; border-top: 1px solid #080808; font: 11px/17px "Liberation Mono", "Noto Sans CJK SC", monospace; }
.effects li { display: flex; height: 17px; padding-left: 8px; border-bottom: 1px solid #1f1f1f; background: #262626; }
.effects li::before { content: ""; width: 5px; height: 5px; margin: 6px 5px 0 -2px; border: solid #a0a0a0; border-width: 1px 1px 0 0; transform: rotate(45deg); }
.effects .latin { font-size: 10px; }
.scroll { width: 13px; padding: 0 2px; background: #1b1b1b; }
.scroll i { display: block; height: 388px; border-radius: 5px; background: #2c2c2c; }

/* timeline */
.timeline { flex: none; background: #232323; border-top: 1px solid #141414; }
.timeline .vtabs { height: 30px; padding-left: 10px; }
.timeline .name { margin-left: 12px; }
.tgrid { display: flex; }
.layers { flex: none; width: 702px; border-right: 2px solid #080808; }
.controls { display: flex; align-items: center; height: 35px; }
.clock { width: 124px; padding: 0 0 0 11px; white-space: nowrap; }
.clock b { display: block; padding-left: 14px; color: #3489e0; font: bold 15px/16px "Open Sans", sans-serif; }
.clock span { display: block; font: 10px/14px "Liberation Mono", monospace; color: #214f86; }
.controls .field { width: 375px; }
.icons { display: flex; gap: 10px; margin-left: 15px; color: #b4b4b4; }
.icons button { display: grid; place-items: center; width: 18px; height: 20px; }
.icons button:nth-child(-n+2) { margin-right: 6px; }
.icons button:nth-child(n+3) { margin-right: -2px; }
.icons .graph { margin-left: 8px; }
.colhead { display: grid; grid-template-columns: 69px 32px 33px 132px 136px 165px 117px 1fr; height: 21px; align-items: center; background: #303030; border: solid #080808; border-width: 1px 0; color: #b4b4b4; }
.colhead > div { display: flex; align-items: center; height: 15px; padding-left: 7px; border-right: 1px solid #141414; white-space: nowrap; }
.colhead > div:last-child { border: 0; }
.colhead .av { gap: 3px; }
.colhead .tagcol { padding-left: 13px; }
.colhead .num { font-size: 10px; color: #999; }
.colhead .switches { padding-left: 2px; gap: 1px; }
.switches em { width: 14px; font: italic 14px/14px "Liberation Serif", serif; }
.trk { font-size: 11px; color: #808080; }
.mode .trk { margin-left: 48px; }
.mode .trk + .trk { margin-left: 11px; }
.rows { font-size: 11px; }
.row { display: grid; grid-template-columns: 270px 314px 1fr; align-items: center; height: 20px; background: #252525; border-bottom: 1px solid #1e1e1e; }
.row.cut { height: 4px; }
.cell { display: flex; align-items: center; gap: 12px; white-space: pre; line-height: 18px; font-family: "Liberation Mono", "Noto Sans CJK SC", monospace; }
.n0 { padding-left: 93px; }
.n1 { padding-left: 8px; }
.n1 .eye { margin-right: 101px; color: #d0d0d0; }
.n2 { padding-left: 135px; gap: 10px; }
.prop { padding-left: 170px; gap: 7px; }
.blend { width: 127px; font-size: 12px; }
.blend select { height: 18px; background: #1a1a1a; color: #c4c4c4; }
.blend svg { top: 4px; }
.val { display: flex; align-items: center; font: 10px/18px "Liberation Mono", monospace; color: #3489e0; }
.val small { font-size: 9px; color: #888; }
.val .turn { margin-right: 2px; }
.link { margin-right: 4px; }
.reset { color: #3489e0; font-weight: 700; }

.tracks { position: relative; flex: 1; min-width: 0; overflow: hidden; padding-top: 5px; }
.navbar, .work { display: flex; height: 11px; border: solid #080808; border-width: 1px 0; }
.bar { flex: 1; background: #666; border: solid #080808; border-width: 0 1px; }
.cap { width: 5px; background: #2f8df0; }
.cap.l { border-radius: 5px 0 0 5px; }
.cap.r { border-radius: 0 5px 5px 0; }
.tracks .cap.r { margin-right: 2px; }
.ruler { display: flex; height: 19px; padding: 0 7px 0 6px; font: 10px/15px "Liberation Mono", monospace; }
.ruler span { position: relative; flex: 0 0 11%; white-space: nowrap; text-align: center; }
.ruler span:first-child { margin-left: -5.5%; padding-left: 14px; }
.ruler span:last-child { padding-right: 10px; }
.ruler span::before { content: ""; position: absolute; left: 50%; bottom: 0; width: 1px; height: 5px; background: #888; }
.work { height: 21px; border-bottom-width: 2px; }
.work .bar { background: #5e5e5e; border-bottom: 0; box-shadow: inset 0 -3px #22b02c; }
.lanes { display: block; padding: 0 7px 0 0; background: #292929; }
.lanes i { display: block; height: 20px; margin-left: 6px; background: #343434; border-bottom: 1px solid #1c1c1c; }
.lanes .cut { height: 4px; }
.overlay { position: absolute; inset: 5px 7px 0 6px; pointer-events: none; }
.playhead { position: absolute; left: 26.3%; top: 1px; bottom: 0; width: 12px; display: flex; flex-direction: column; align-items: center; background: linear-gradient(#2f8df0, #2f8df0) center / 1px 100% no-repeat; color: #b4b4b4; }
.head { margin-top: 14px; }
.beams { margin-top: 24px; display: flex; flex-direction: column; }
.beams svg { margin: 3px 0; }
.tside { display: flex; flex-direction: column; align-items: center; width: 18px; flex: none; padding-top: 36px; gap: 4px; background: #1f1f1f; }
.thumbbar { width: 14px; flex: 1; margin: 56px 0 2px; border-radius: 5px; background: #2e2e2e; }
.tfoot { display: flex; align-items: center; height: 18px; padding-left: 4px; border-top: 1px solid #080808; }
.tfoot button { display: grid; place-items: center; width: 18px; height: 16px; }
.zoom { display: flex; align-items: center; margin-left: 647px; gap: 9px; }
.zoom input { appearance: none; width: 50px; height: 12px; background: linear-gradient(#444, #444) center / 100% 3px no-repeat; }
.zoom input::-webkit-slider-thumb { appearance: none; width: 11px; height: 11px; border: 2px solid #b4b4b4; border-radius: 50%; background: #232323; }

/* popup menu */
.popup { position: absolute; left: 741px; top: 57px; width: 150px; padding: 2px; background: #f1f1f1; border: 1px solid #c8c8c8; color: #111; font-size: 12px; font-family: "Open Sans", "Noto Sans CJK SC", sans-serif; }
.popup button { display: block; width: 100%; height: 22px; padding-left: 32px; text-align: left; }
.popup hr { height: 1px; margin: 3px 0 3px 30px; border: 0; background: #d0d0d0; }
.popup .hover { background: #91c9f7; }
```
